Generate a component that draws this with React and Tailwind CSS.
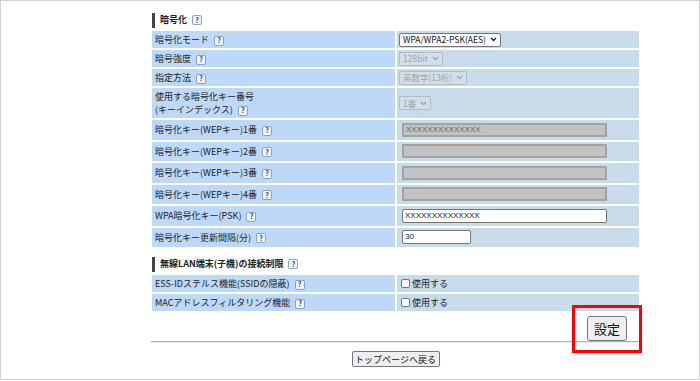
import React from 'react';

const jp = { fontFamily: '"Noto Sans CJK JP", "Liberation Sans", sans-serif' };
const latin = { fontFamily: '"Liberation Sans", "Noto Sans CJK JP", sans-serif' };

const Help = () => (
  <span className="inline-flex items-center justify-center w-[10px] h-[10px] ml-[5px] rounded-[2px] border border-[#8aa3be] bg-[#eef4fb] text-[7px] font-bold leading-none text-[#333]">
    ?
  </span>
);

const Chevron = ({ color = '#222' }) => (
  <svg width="7" height="5" viewBox="0 0 7 5" className="ml-[4px]">
    <path d="M1 1 L3.5 3.5 L6 1" fill="none" stroke={color} strokeWidth="1.4" />
  </svg>
);

const Select = ({ value, disabled }) => (
  <span
    style={latin}
    className={
      'inline-flex items-center h-[14px] pl-[3px] pr-[3px] rounded-[2px] border text-[8.5px] leading-none ' +
      (disabled
        ? 'bg-[#d3dee8] border-[#b0bdc9] text-[#9ba6b0]'
        : 'bg-white border-[#767676] text-[#111]')
    }
  >
    <span style={jp}>{value}</span>
    <Chevron color={disabled ? '#9ba6b0' : '#222'} />
  </span>
);

const TextBox = ({ value = '', disabled, width = 'w-[205px]' }) => (
  <span
    style={latin}
    className={
      'flex items-center h-[14px] ml-[3px] pl-[2px] text-[8px] leading-none ' + width + ' ' +
      (disabled
        ? 'bg-[#c2c2c2] border-2 border-[#a3a3a3] text-[#666]'
        : 'bg-white border border-[#767676] rounded-[2px] text-[#111]')
    }
  >
    {value}
  </span>
);

const Check = () => (
  <span className="flex items-center ml-[2px] text-[9px] text-[#222]" style={jp}>
    <span className="inline-block w-[9px] h-[9px] mr-[2px] rounded-[2px] border border-[#767676] bg-white" />
    使用する
  </span>
);

const Row = ({ label, h = 'h-[17px]', children }) => (
  <>
    <div className={'flex items-center pl-[3px] bg-[#bdd9f7] text-[9px] text-[#222] ' + h} style={jp}>
      <span className="leading-[13px]">{label}</span>
    </div>
    <div className={'flex items-center pl-[2px] bg-[#c8dbea] ' + h}>{children}</div>
  </>
);

const SectionTitle = ({ children }) => (
  <div className="flex items-center h-[16px] pl-[2px]" style={jp}>
    <span className="w-[3px] h-[15px] bg-[#444]" />
    <span className="ml-[5px] text-[9px] font-bold text-[#222]">{children}</span>
    <Help />
  </div>
);

export default function App() {
  return (
    <div className="relative w-[700px] h-[381px] bg-white">
      <div className="w-[700px] h-[380px] border border-[#d2d2d2]">
        <div className="ml-[149px] w-[491px] pt-[11px]">
          <SectionTitle>暗号化</SectionTitle>

          <div className="grid grid-cols-[243px_242px] gap-[2px] px-[2px] mt-[3px]">
            <Row label={<>暗号化モード<Help /></>}>
              <Select value="WPA/WPA2-PSK(AES)" />
            </Row>
            <Row label={<>暗号強度<Help /></>}>
              <Select value="128bit" disabled />
            </Row>
            <Row label={<>指定方法<Help /></>}>
              <Select value="英数字(13桁)" disabled />
            </Row>
            <Row h="h-[30px]" label={<>使用する暗号化キー番号<br />(キーインデックス)<Help /></>}>
              <Select value="1番" disabled />
            </Row>
            <Row h="h-[19.5px]" label={<>暗号化キー(WEPキー)1番<Help /></>}>
              <TextBox value="XXXXXXXXXXXXXX" disabled />
            </Row>
            <Row h="h-[19.5px]" label={<>暗号化キー(WEPキー)2番<Help /></>}>
              <TextBox disabled />
            </Row>
            <Row h="h-[19.5px]" label={<>暗号化キー(WEPキー)3番<Help /></>}>
              <TextBox disabled />
            </Row>
            <Row h="h-[19.5px]" label={<>暗号化キー(WEPキー)4番<Help /></>}>
              <TextBox disabled />
            </Row>
            <Row h="h-[19.5px]" label={<>WPA暗号化キー(PSK)<Help /></>}>
              <TextBox value="XXXXXXXXXXXXXX" />
            </Row>
            <Row h="h-[19.5px]" label={<>暗号化キー更新間隔(分)<Help /></>}>
              <TextBox value="30" width="w-[69px]" />
            </Row>
          </div>

          <div className="mt-[9px]">
            <SectionTitle>無線LAN端末(子機)の接続制限</SectionTitle>
          </div>

          <div className="grid grid-cols-[243px_242px] gap-[2px] px-[2px] mt-[3px]">
            <Row label={<>ESS-IDステルス機能(SSIDの隠蔽)<Help /></>}>
              <Check />
            </Row>
            <Row label={<>MACアドレスフィルタリング機能<Help /></>}>
              <Check />
            </Row>
          </div>

          <div className="flex justify-end pr-[14px] mt-[5px]">
            <button
              className="w-[40px] h-[25px] rounded-[3px] border border-[#767676] bg-[#efefef] text-[13px] text-[#111]"
              style={jp}
            >
              設定
            </button>
          </div>

          <div className="ml-[1px] mr-[1px] border-t border-[#b4b4b4] shadow-[0_1px_0_#e6e6e6]" />

          <div className="flex justify-center mt-[9px]">
            <button
              className="w-[88px] h-[16px] rounded-[2px] border border-[#767676] bg-[#efefef] text-[9px] leading-none text-[#111]"
              style={jp}
            >
              トップページへ戻る
            </button>
          </div>
        </div>
      </div>

      <div className="absolute left-[572px] top-[305px] w-[70px] h-[48px] border-[3px] border-[#ff0000]" />
    </div>
  );
}
